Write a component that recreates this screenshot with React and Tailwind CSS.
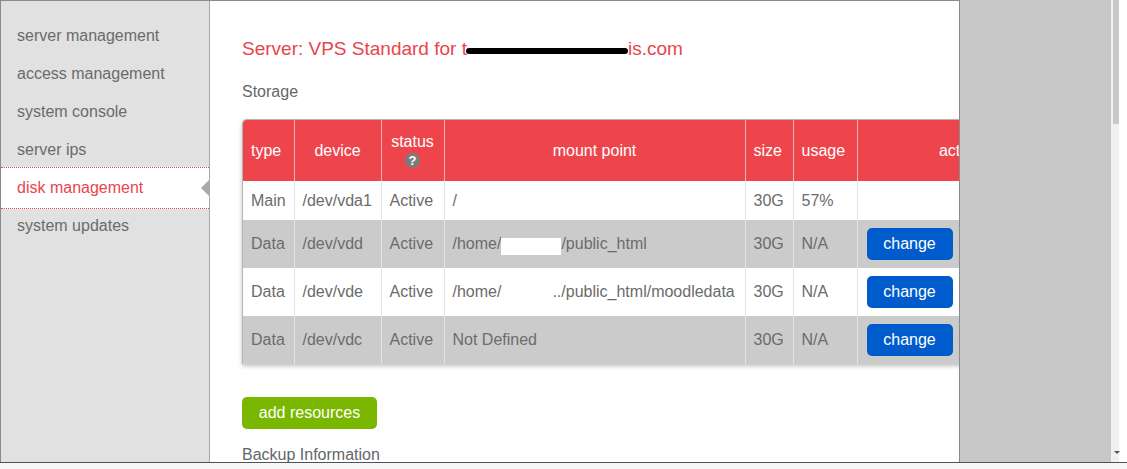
import React from 'react';

const navItems = [
  'server management',
  'access management',
  'system console',
  'server ips',
  'disk management',
  'system updates',
];

const SideItem = ({ label, active }) => {
  if (active) {
    return (
      <div className="relative -my-[2px] h-[42px] flex items-center pl-4 bg-white border-y border-dotted border-[#e9454b] text-[#e9454b]">
        <span>{label}</span>
        <span className="absolute right-0 top-[12px] w-0 h-0 border-y-[8px] border-y-transparent border-r-[8px] border-r-[#a9a9a9]" />
      </div>
    );
  }
  return (
    <div className="h-[38px] flex items-center pl-4 text-[#6b6b6b]">
      <span>{label}</span>
    </div>
  );
};

const Btn = () => (
  <button className="w-[86px] h-[32px] rounded-[5px] bg-[#005ccc] text-white text-[16px] leading-none">
    change
  </button>
);

const rows = [
  { type: 'Main', dev: '/dev/vda1', mount: <>/</>, size: '30G', usage: '57%', btn: false, gray: false },
  {
    type: 'Data',
    dev: '/dev/vdd',
    mount: (
      <>
        /home/
        <span className="inline-block align-middle w-[60px] h-[17px] bg-white relative top-[2px]" />
        /public_html
      </>
    ),
    size: '30G',
    usage: 'N/A',
    btn: true,
    gray: true,
  },
  {
    type: 'Data',
    dev: '/dev/vde',
    mount: (
      <>
        /home/
        <span className="inline-block w-[51px]" />
        ../public_html/moodledata
      </>
    ),
    size: '30G',
    usage: 'N/A',
    btn: true,
    gray: false,
  },
  { type: 'Data', dev: '/dev/vdc', mount: <>Not Defined</>, size: '30G', usage: 'N/A', btn: true, gray: true },
];

export default function App() {
  const th = 'border-l border-[#f2b2b5] first:border-l-0 font-normal align-middle';
  const td = 'border-l border-[#e3e3e3] first:border-l-0 align-middle px-2 text-left';
  return (
    <div className="w-[1127px] h-[469px] overflow-hidden bg-white font-['Liberation_Sans',Arial,sans-serif] text-[16px]">
      <div className="flex h-[462px]">
        <div className="w-[960px] h-full flex border-t border-l border-r border-[#8a8a8a]">
          <div className="w-[209px] shrink-0 h-full bg-[#e1e1e1] border-r border-[#a8a8a8] pt-[16px]">
            {navItems.map((n) => (
              <SideItem key={n} label={n} active={n === 'disk management'} />
            ))}
          </div>
          <div className="flex-1 overflow-hidden pl-8 pt-[37px]">
            <div className="text-[19px] leading-[22px] text-[#e9454b] whitespace-nowrap flex items-center">
              <span>Server: VPS Standard for t</span>
              <span className="inline-block w-[162px] h-[6px] rounded-full bg-black relative top-[2px] -ml-[1px]" />
              <span>is.com</span>
            </div>
            <div className="mt-[23px] leading-[18px] text-[#666]">Storage</div>
            <div className="mt-[18px] w-[820px] border-t border-l border-[#b5b5b5] rounded-tl-[5px] overflow-hidden shadow-[0_2px_4px_rgba(0,0,0,0.25)]">
              <table className="border-collapse table-fixed w-[820px]">
                <colgroup>
                  <col className="w-[51px]" />
                  <col className="w-[87px]" />
                  <col className="w-[63px]" />
                  <col className="w-[301px]" />
                  <col className="w-[48px]" />
                  <col className="w-[64px]" />
                  <col className="w-[206px]" />
                </colgroup>
                <thead>
                  <tr className="h-[61px] bg-[#ee454c] text-white">
                    <th className={`${th} text-left pl-2`}>type</th>
                    <th className={th}>device</th>
                    <th className={th}>
                      <div className="flex flex-col items-center leading-[19px] -mt-[2px]">
                        <span>status</span>
                        <span className="mt-[2px] w-[15px] h-[15px] rounded-full bg-[#7b7b7b] text-white text-[13px] font-bold leading-[15px] text-center">?</span>
                      </div>
                    </th>
                    <th className={th}>mount point</th>
                    <th className={`${th} text-left pl-2`}>size</th>
                    <th className={`${th} text-left pl-2`}>usage</th>
                    <th className={th}>action</th>
                  </tr>
                </thead>
                <tbody className="text-[#6b6b6b]">
                  {rows.map((r, i) => (
                    <tr key={i} className={`${r.btn ? 'h-[48px]' : 'h-[39px]'} ${r.gray ? 'bg-[#cbcbcb]' : 'bg-white'}`}>
                      <td className={td}>{r.type}</td>
                      <td className={td}>{r.dev}</td>
                      <td className={td}>Active</td>
                      <td className={`${td} whitespace-nowrap`}>{r.mount}</td>
                      <td className={td}>{r.size}</td>
                      <td className={td}>{r.usage}</td>
                      <td className={`${td} pl-[9px]`}>{r.btn ? <Btn /> : null}</td>
                    </tr>
                  ))}
                </tbody>
              </table>
            </div>
            <button className="mt-[33px] w-[135px] h-[32px] rounded-[5px] bg-[#7ab700] text-white text-[16px] leading-none">
              add resources
            </button>
            <div className="mt-[17px] leading-[18px] text-[#666]">Backup Information</div>
          </div>
        </div>
        <div className="w-[151px] h-full bg-[#c8c8c8]" />
        <div className="w-[16px] h-full bg-[#f0f0f0] relative">
          <div className="absolute left-[2px] top-0 w-[6px] h-[124px] bg-[#c8c8c8]" />
          <div className="absolute right-0 top-0 w-[8px] h-full bg-white" />
          <span className="absolute left-[3px] bottom-[8px] w-0 h-0 border-x-[3px] border-x-transparent border-t-[3px] border-t-[#555]" />
        </div>
      </div>
      <div className="h-[7px] border-t border-[#4a5560] bg-[#f6f6f6]" />
    </div>
  );
}
